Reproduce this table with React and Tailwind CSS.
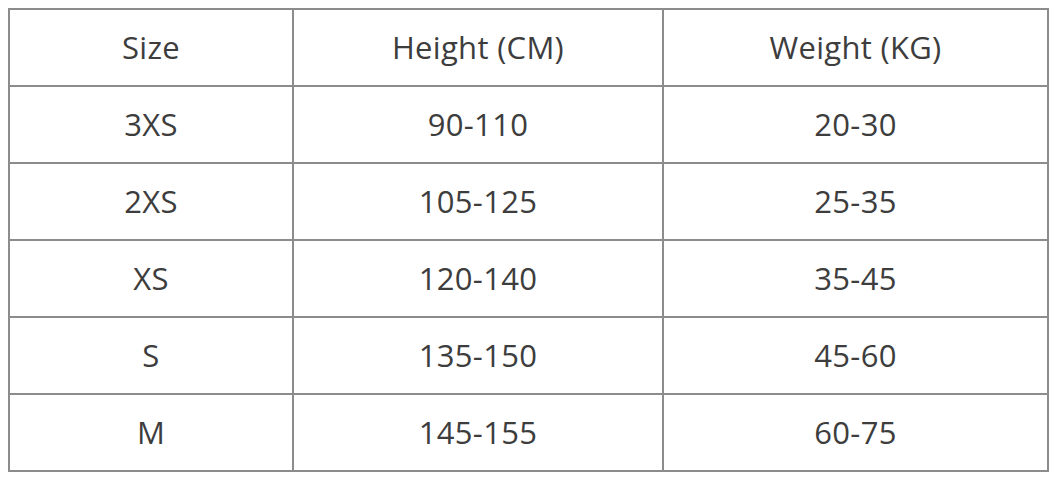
const rows = [
  ['3XS', '90-110', '20-30'],
  ['2XS', '105-125', '25-35'],
  ['XS', '120-140', '35-45'],
  ['S', '135-150', '45-60'],
  ['M', '145-155', '60-75'],
]

export default function App() {
  const cell = 'h-[77px] border-2 border-[#8c8c8c] text-center align-middle'
  return (
    <div className="h-[481px] w-[1059px] bg-white pl-[8px] pt-[8px] font-['Open_Sans',sans-serif] text-[31px] tracking-[0.01em] text-[#3d3d3d]">
      <table className="border-collapse">
        <thead>
          <tr>
            <td className={`${cell} w-[284px]`}>Size</td>
            <td className={`${cell} w-[370px]`}>Height (CM)</td>
            <td className={`${cell} w-[385px]`}>Weight (KG)</td>
          </tr>
        </thead>
        <tbody>
          {rows.map(r => (
            <tr key={r[0]}>
              {r.map((v, i) => (
                <td key={i} className={cell}>{v}</td>
              ))}
            </tr>
          ))}
        </tbody>
      </table>
    </div>
  )
}
